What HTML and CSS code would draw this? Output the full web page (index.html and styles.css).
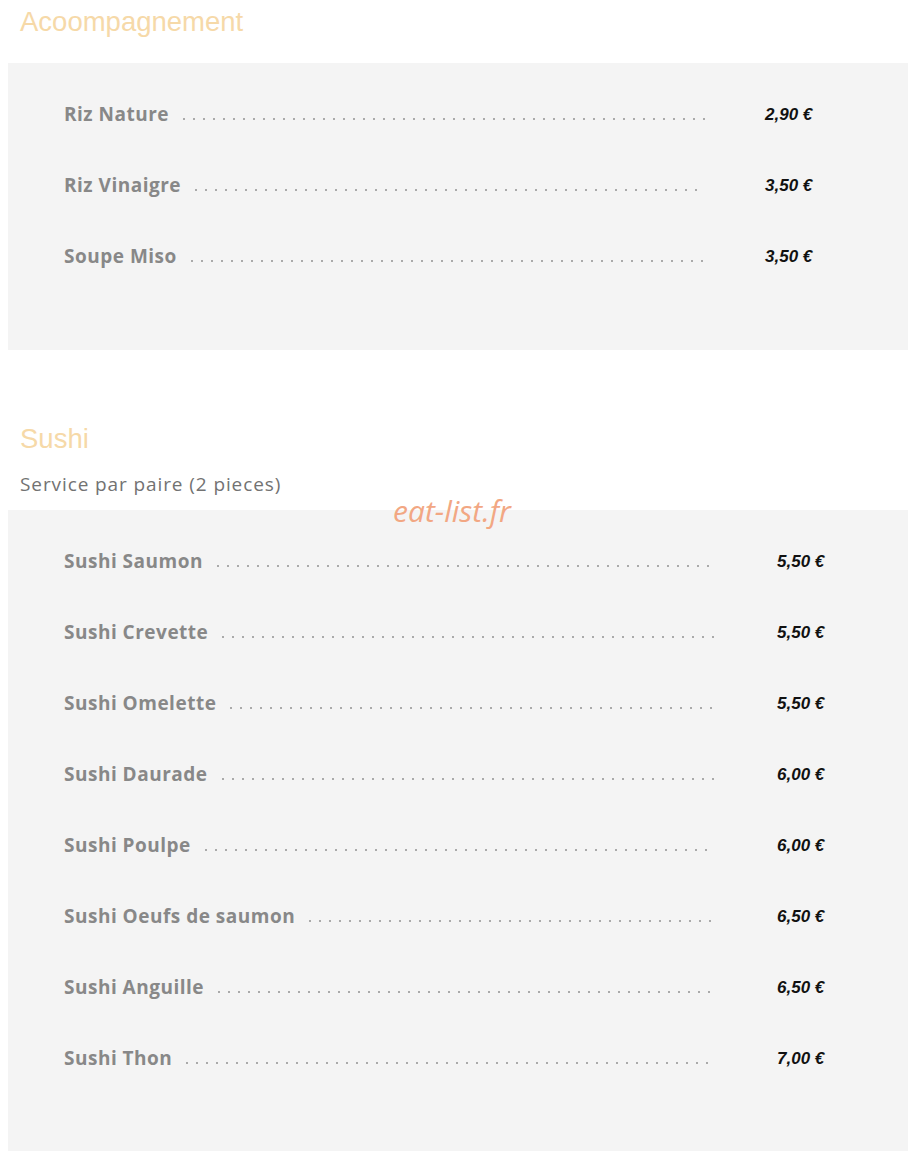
FILE: index.html
```html
<!DOCTYPE html>
<html lang="fr">
<head>
  <meta charset="UTF-8">
  <meta name="viewport" content="width=device-width, initial-scale=1.0">
  <title>Carte - Accompagnement &amp; Sushi</title>
  <link rel="stylesheet" href="styles.css">
</head>
<body>
  <!-- Accompagnement -->
  <section class="menu-section">
    <h2 class="section-title">Acoompagnement</h2>
    <div class="menu-panel">
      <div class="menu-row">
        <div class="dish"><span class="dish-name">Riz Nature</span><span class="leader"></span></div>
        <span class="price">2,90 €</span>
      </div>
      <div class="menu-row">
        <div class="dish"><span class="dish-name">Riz Vinaigre</span><span class="leader"></span></div>
        <span class="price">3,50 €</span>
      </div>
      <div class="menu-row">
        <div class="dish"><span class="dish-name">Soupe Miso</span><span class="leader"></span></div>
        <span class="price">3,50 €</span>
      </div>
    </div>
  </section>

  <!-- Sushi -->
  <section class="menu-section second">
    <h2 class="section-title">Sushi</h2>
    <p class="section-note">Service par paire (2 pieces)</p>
    <span class="watermark">eat-list.fr</span>
    <div class="menu-panel wide">
      <div class="menu-row">
        <div class="dish"><span class="dish-name">Sushi Saumon</span><span class="leader"></span></div>
        <span class="price">5,50 €</span>
      </div>
      <div class="menu-row">
        <div class="dish"><span class="dish-name">Sushi Crevette</span><span class="leader"></span></div>
        <span class="price">5,50 €</span>
      </div>
      <div class="menu-row">
        <div class="dish"><span class="dish-name">Sushi Omelette</span><span class="leader"></span></div>
        <span class="price">5,50 €</span>
      </div>
      <div class="menu-row">
        <div class="dish"><span class="dish-name">Sushi Daurade</span><span class="leader"></span></div>
        <span class="price">6,00 €</span>
      </div>
      <div class="menu-row">
        <div class="dish"><span class="dish-name">Sushi Poulpe</span><span class="leader"></span></div>
        <span class="price">6,00 €</span>
      </div>
      <div class="menu-row">
        <div class="dish"><span class="dish-name">Sushi Oeufs de saumon</span><span class="leader"></span></div>
        <span class="price">6,50 €</span>
      </div>
      <div class="menu-row">
        <div class="dish"><span class="dish-name">Sushi Anguille</span><span class="leader"></span></div>
        <span class="price">6,50 €</span>
      </div>
      <div class="menu-row">
        <div class="dish"><span class="dish-name">Sushi Thon</span><span class="leader"></span></div>
        <span class="price">7,00 €</span>
      </div>
    </div>
  </section>
</body>
</html>
```

FILE: styles.css
```css
/* Global */
body {
  margin: 8px;
  background: #fff;
  font-family: 'Liberation Sans', Arial, sans-serif;
}

/* Sections */
.menu-section {
  position: relative;
}

.menu-section.second {
  margin-top: 75px;
}

.section-title {
  margin: 0;
  padding: 0 12px;
  font-size: 27.5px;
  line-height: 28px;
  font-weight: normal;
  color: #f6d9a8;
}

.section-note {
  margin: 19px 0 0;
  padding-left: 12px;
  font-family: 'Open Sans', sans-serif;
  font-size: 19px;
  line-height: 24px;
  letter-spacing: 0.9px;
  color: #727272;
}

/* Grey panel holding the rows */
.menu-panel {
  margin-top: 27px;
  padding: 16px 0 58px 56px;
  width: 844px;
  background: #f4f4f4;
}

.second .menu-panel {
  margin-top: 14px;
  padding-bottom: 57px;
}

/* Rows */
.menu-row {
  display: flex;
  align-items: center;
  height: 71px;
}

.dish {
  display: flex;
  align-items: baseline;
  width: 641px;
  margin-top: -2px;
}

.wide .dish {
  width: 650px;
}

.dish-name {
  font-family: 'Open Sans', sans-serif;
  font-weight: 700;
  font-size: 19px;
  letter-spacing: 0.5px;
  color: #888;
  white-space: nowrap;
}

/* Dotted leader between name and price */
.leader {
  flex: 1;
  height: 4px;
  margin-left: 10px;
  background-image: radial-gradient(circle, #aaa 0.9px, transparent 1.4px);
  background-size: 10px 4px;
  background-repeat: repeat-x;
}

.price {
  margin-left: 60px;
  font-size: 17px;
  font-weight: bold;
  font-style: italic;
  color: #111;
}

.wide .price {
  margin-left: 63px;
}

/* Site watermark laid over the page */
.watermark {
  position: absolute;
  left: 385px;
  top: 65px;
  font-family: 'Open Sans', sans-serif;
  font-style: italic;
  font-size: 30px;
  color: #f2a783;
}
```
